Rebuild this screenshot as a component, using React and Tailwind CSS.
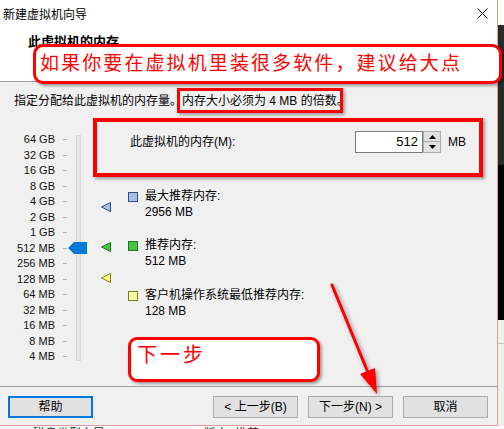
const sizes = ["64 GB", "32 GB", "16 GB", "8 GB", "4 GB", "2 GB", "1 GB", "512 MB", "256 MB", "128 MB", "64 MB", "32 MB", "16 MB", "8 MB", "4 MB"];

const infos = [
  { label: "最大推荐内存:", value: "2956 MB", box: "bg-[#a9c1e6] border-[#2d4f86]", gap: "mt-[35px]" },
  { label: "推荐内存:", value: "512 MB", box: "bg-[#45c445] border-[#1f7a1f]", gap: "mt-[17px]" },
  { label: "客户机操作系统最低推荐内存:", value: "128 MB", box: "bg-[#ffff99] border-[#7f7f1f]", gap: "mt-[18px]" },
];

function Marker({ top, fill, stroke }) {
  return (
    <svg className={`absolute left-0 ${top}`} width="10" height="10" viewBox="0 0 10 10">
      <polygon points="0.5,5 9.5,0.5 9.5,9.5" fill={fill} stroke={stroke} strokeWidth="1" />
    </svg>
  );
}

function Button({ children, focused }) {
  return (
    <div
      className={`flex h-[22px] w-[85px] items-center justify-center bg-[#e1e1e1] text-[12px] text-black ${
        focused ? "border-2 border-[#0078d7]" : "border border-[#adadad]"
      }`}
    >
      {children}
    </div>
  );
}

export default function App() {
  return (
    <div className="relative h-[429px] w-[504px] overflow-hidden bg-white font-['Liberation_Sans','Noto_Sans_CJK_SC',sans-serif] text-black">
      <div className="flex">
        {/* dialog window */}
        <div className="flex h-[426px] w-[498px] flex-col border-r border-b border-[#e59a9a]">
          <div className="flex h-[30px] items-center justify-between bg-white pl-[3px] pr-[9px]">
            <span className="text-[12px] leading-[14px]">新建虚拟机向导</span>
            <svg width="11" height="11" viewBox="0 0 11 11" className="mb-[4px]">
              <path d="M0.5 0.5 L10.5 10.5 M10.5 0.5 L0.5 10.5" stroke="#000" strokeWidth="1" />
            </svg>
          </div>
          <div className="h-[52px] border-b border-[#a0a0a0] bg-white pl-[28px] pt-[5px]">
            <p className="text-[13px] font-bold leading-[14px]">此虚拟机的内存</p>
          </div>

          <div className="flex-1 bg-[#f0f0f0]">
            <p className="pl-[14px] pt-[12px] text-[12px] leading-[14px]">
              指定分配给此虚拟机的内存量。内存大小必须为 4 MB 的倍数。
            </p>
            <div className="mt-[23px] flex">
              <div className="flex w-[55px] flex-col items-end pt-[1px]">
                {sizes.map((s) => (
                  <span key={s} className="h-[15.5px] text-[11px] leading-[15.5px] text-[#111]">
                    {s}
                  </span>
                ))}
              </div>
              <div className="ml-[8px] flex w-[4px] flex-col pt-[1px]">
                {sizes.map((s) => (
                  <div key={s} className="flex h-[15.5px] items-center">
                    <div className="h-px w-[4px] bg-[#b5b5b5]" />
                  </div>
                ))}
              </div>
              <div className="relative ml-[9px] mt-[4px] h-[226px] w-[5px] border border-[#d9d9d9] bg-[#e7e7e7]">
                <svg className="absolute -left-[9px] top-[106px]" width="19" height="12" viewBox="0 0 19 12">
                  <polygon points="0,6 6,0 19,0 19,12 6,12" fill="#0078d7" />
                </svg>
              </div>
              <div className="relative ml-[20px] w-[10px]">
                <Marker top="top-[71px]" fill="#a9c1e6" stroke="#2d4f86" />
                <Marker top="top-[111px]" fill="#45c445" stroke="#1f7a1f" />
                <Marker top="top-[142px]" fill="#ffff80" stroke="#8a8a20" />
              </div>
              <div className="ml-[17px] flex flex-col">
                <div className="flex h-[22px] items-center">
                  <span className="w-[227px] pl-[2px] text-[12px]">此虚拟机的内存(M):</span>
                  <div className="flex h-[22px] w-[68px] items-center justify-end border border-[#7a7a7a] bg-white pr-[4px] text-[13px]">
                    512
                  </div>
                  <div className="flex h-[22px] w-[18px] flex-col">
                    <div className="flex h-[11px] items-center justify-center border border-[#adadad] bg-[#e1e1e1]">
                      <svg width="7" height="4" viewBox="0 0 7 4">
                        <polygon points="0,4 3.5,0 7,4" fill="#000" />
                      </svg>
                    </div>
                    <div className="flex h-[11px] items-center justify-center border border-t-0 border-[#adadad] bg-[#e1e1e1]">
                      <svg width="7" height="4" viewBox="0 0 7 4">
                        <polygon points="0,0 7,0 3.5,4" fill="#000" />
                      </svg>
                    </div>
                  </div>
                  <span className="ml-[7px] text-[12px]">MB</span>
                </div>
                {infos.map((it) => (
                  <div key={it.label} className={`flex ${it.gap}`}>
                    <div className={`mt-[4px] h-[10px] w-[10px] border ${it.box}`} />
                    <div className="ml-[7px] flex flex-col text-[12px] leading-[16px]">
                      <span>{it.label}</span>
                      <span>{it.value}</span>
                    </div>
                  </div>
                ))}
              </div>
            </div>
          </div>

          <div className="flex h-[39px] items-start border-t border-[#a0a0a0] bg-[#f0f0f0] pl-[8px] pr-[9px] pt-[9px]">
            <Button focused>帮助</Button>
            <div className="ml-auto flex gap-[10px]">
              <Button>&lt; 上一步(B)</Button>
              <Button>下一步(N) &gt;</Button>
              <Button>取消</Button>
            </div>
          </div>
        </div>

        {/* background strip right of window */}
        <div className="flex w-[6px] flex-col">
          <div className="h-[25px] bg-white" />
          <div className="h-[140px] bg-[#2b2b2b]" />
          <div className="h-[155px] bg-black" />
          <div className="h-[23px] bg-[#f0f0f0]" />
          <div className="h-px bg-[#c8c8c8]" />
          <div className="flex-1 bg-[#f0f0f0]" />
        </div>
      </div>
      <div className="h-[3px] overflow-hidden bg-white pl-[33px]">
        <p className="mt-[1px] text-[12px] leading-[14px] text-[#222]">磁盘类型向导 (Windows 10 x64 版本) 推荐</p>
      </div>

      {/* annotations */}
      <div className="absolute left-[33px] top-[44px] h-[40px] w-[469px] rounded-[10px] border-[3px] border-[#ff0000] bg-white pl-[4px] shadow-[2px_2px_3px_rgba(0,0,0,0.35)]">
        <p className="text-[19px] leading-[34px] tracking-[2.1px] text-[#ff0000]">如果你要在虚拟机里装很多软件，建议给大点</p>
      </div>
      <div className="absolute left-[177px] top-[88px] h-[25px] w-[166px] border-[3px] border-[#ff0000] shadow-[2px_2px_3px_rgba(0,0,0,0.35)]" />
      <div className="absolute left-[93px] top-[118px] h-[59px] w-[390px] border-[4px] border-[#ff0000] shadow-[2px_2px_3px_rgba(0,0,0,0.35)]" />
      <div className="absolute left-[128px] top-[337px] h-[45px] w-[192px] rounded-[9px] border-[3px] border-[#ff0000] bg-white pl-[6px] pt-[3px] shadow-[2px_2px_3px_rgba(0,0,0,0.35)]">
        <p className="text-[20px] leading-[24px] tracking-[3px] text-[#ff0000]">下一步</p>
      </div>
      <svg
        className="absolute left-[320px] top-[280px] drop-shadow-[2px_2px_2px_rgba(0,0,0,0.4)]"
        width="70"
        height="120"
        viewBox="320 280 70 120"
      >
        <line x1="332" y1="285" x2="369" y2="375" stroke="#ff0000" strokeWidth="3" strokeLinecap="round" />
        <polygon points="377,394 360,374 375,368" fill="#ff0000" />
      </svg>
    </div>
  );
}
